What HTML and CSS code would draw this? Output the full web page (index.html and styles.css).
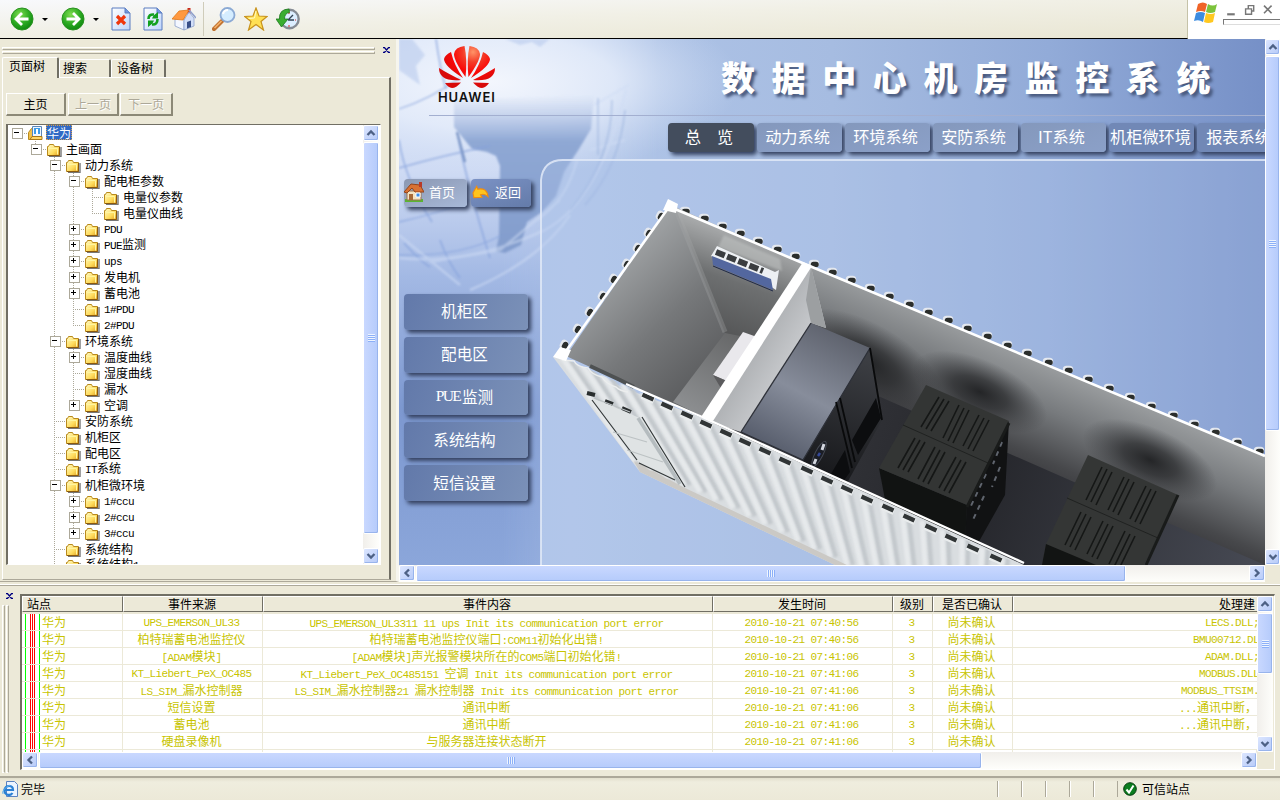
FILE: index.html
```html
<!DOCTYPE html>
<html lang="zh-CN">
<head>
<meta charset="utf-8">
<title>数据中心机房监控系统</title>
<link rel="stylesheet" href="styles.css">
</head>
<body>
<svg class="defs" width="0" height="0">
  <defs>
    <linearGradient id="fold" x1="0" y1="0" x2="1" y2="1"><stop offset="0" stop-color="#fffbc8"/><stop offset=".6" stop-color="#ffdc5c"/><stop offset="1" stop-color="#e0a020"/></linearGradient>
    <radialGradient id="ball" cx=".4" cy=".3" r=".7"><stop offset="0" stop-color="#7fdc50"/><stop offset=".6" stop-color="#2cab22"/><stop offset="1" stop-color="#108a10"/></radialGradient>
    <linearGradient id="page" x1="0" y1="0" x2="1" y2="1"><stop offset="0" stop-color="#fff"/><stop offset="1" stop-color="#bdd4fb"/></linearGradient>
    <symbol id="folder" viewBox="0 0 15 14"><path d="M2 13.500h12V4" fill="none" stroke="#777" stroke-width="1.400"/><path d="M.5 12.500V3.500h1l1-2h4l1 2h5v9z" fill="url(#fold)" stroke="#b98a1c"/><path d="M2 5.500h8.500v6" fill="none" stroke="#fff6a0"/><path d="M12.500 4v8.500H1" fill="none" stroke="#8c5a0c"/></symbol>
    <symbol id="up" viewBox="0 0 10 10"><path d="M1.500 7L5 3.500 8.500 7" fill="none" stroke="#4d6185" stroke-width="2.300"/></symbol>
    <symbol id="down" viewBox="0 0 10 10"><path d="M1.500 3L5 6.500 8.500 3" fill="none" stroke="#4d6185" stroke-width="2.300"/></symbol>
    <symbol id="left" viewBox="0 0 10 10"><path d="M7 1.500L3.500 5 7 8.500" fill="none" stroke="#4d6185" stroke-width="2.300"/></symbol>
    <symbol id="right" viewBox="0 0 10 10"><path d="M3 1.500L6.500 5 3 8.500" fill="none" stroke="#4d6185" stroke-width="2.300"/></symbol>
    <symbol id="close" viewBox="0 0 7 6"><path d="M0 .5h2M5 .5h2M0 5.500h2M5 5.500h2M1 0l5 6M6 0L1 6" stroke="#000080" stroke-width="1.300"/></symbol>
  </defs>
</svg>

<header class="toolbar">
  <div class="tools">
    <svg class="i-back" viewBox="0 0 24 24"><circle cx="12" cy="12" r="11" fill="url(#ball)" stroke="#2a9220"/><path d="M12 6l-6 6 6 6M6.500 12H18.500" fill="none" stroke="#fff" stroke-width="2.800"/></svg>
    <i class="drop"></i>
    <svg class="i-fwd" viewBox="0 0 24 24"><circle cx="12" cy="12" r="11" fill="url(#ball)" stroke="#2a9220"/><path d="M12 6l6 6-6 6M17.500 12H5.500" fill="none" stroke="#fff" stroke-width="2.800"/></svg>
    <i class="drop"></i>
    <svg class="i-stop" viewBox="0 0 20 24"><path d="M1 1h13l5 5v17H1z" fill="url(#page)" stroke="#5a7cc0"/><path d="M14 1v5h5" fill="#7296dc" stroke="#5a7cc0"/><path d="M6 9l8 8M14 9l-8 8" stroke="#f0360c" stroke-width="3.200"/></svg>
    <svg class="i-reload" viewBox="0 0 20 24"><path d="M1 1h13l5 5v17H1z" fill="url(#page)" stroke="#5a7cc0"/><path d="M14 1v5h5" fill="#7296dc" stroke="#5a7cc0"/><path d="M5.500 12q0-5 5.500-4.500M14.500 12q0 6-5.500 5.500" fill="none" stroke="#12a01e" stroke-width="2.600"/><path d="M10.500 8.500L15 5v6.500H9zM9.500 16.500L5 20v-6.500h6z" fill="#12a01e"/></svg>
    <svg class="i-house" viewBox="0 0 24 24"><path d="M15.500 1h3v6h-3z" fill="#c8281c"/><path d="M3 12v7l9 4V11z" fill="#f4f7ff" stroke="#8ca0ca" stroke-width=".8"/><path d="M12 13l5-8 5 6v8l-10 4z" fill="#d3dff8" stroke="#8ca0ca" stroke-width=".8"/><path d="M15 15l4-1.500v6.500l-4 1.500z" fill="#394f88"/><path d="M0 12L7 4l10-1-6 10z" fill="#ff9940" stroke="#e07818" stroke-width=".8"/><path d="M17 3l7 8" stroke="#8fa0cc" stroke-width="1.500"/></svg>
    <i class="sep"></i>
    <svg class="i-search" viewBox="0 0 24 24"><path d="M2 22l8-8" stroke="#c07230" stroke-width="4.200" stroke-linecap="round"/><path d="M2.500 21l7-7" stroke="#f5b26a" stroke-width="1.600"/><circle cx="15.500" cy="8" r="7" fill="#d5edff" stroke="#8caad4" stroke-width="1.800"/><path d="M11 7q1-4 5-4" fill="none" stroke="#fff" stroke-width="2"/></svg>
    <svg class="i-star" viewBox="0 0 24 24"><path d="M12 1l3 8 8 .5-6 5L19.500 23 12 17.500 4.500 23 7 14.500.8 9.500 9 9z" fill="#ffe054" stroke="#c8921c" stroke-width="1.200"/><path d="M12 4l-1.500 7-6 .5" fill="none" stroke="#fffbc4"/></svg>
    <svg class="i-history" viewBox="0 0 24 24"><circle cx="13.500" cy="12" r="9.200" fill="#dceeff" stroke="#858b94" stroke-width="2.400"/><path d="M12 13l5-5M12 13h6" stroke="#345" stroke-width="1.400"/><path d="M13 5v2M13 18v2M19 13h1" stroke="#e02020"/><path d="M13 2Q3 2 3.500 12H0l5.500 8 6.500-8H8.500q0-6 5-6.500z" fill="#3aad30" stroke="#1c7a1c" stroke-width=".8"/></svg>
  </div>
  <div class="brand">
    <svg class="i-win" viewBox="0 0 24 24"><path d="M4 3q5-3 9 0l-2 8q-4-2-9 0z" fill="#f06428"/><path d="M14 3q5 3 9 0l-2 8q-5 2-9 0z" fill="#7cc33c"/><path d="M2 12q5-2 9 0l-2 9q-4-3-9-1z" fill="#3c8ce0"/><path d="M12 12q5 2 9 0l-2 9q-5 2-9 0z" fill="#ffc820"/></svg>
    <div class="wctl">
      <svg viewBox="0 0 46 12"><path d="M1 9.500h7" stroke="#777" stroke-width="2"/><path d="M20.500 4V1.500h5v5H24M18 4.500h5.500v5H18z" fill="none" stroke="#777" stroke-width="1.300"/><path d="M35 1.500l7 7M42 1.500l-7 7" stroke="#777" stroke-width="1.500"/></svg>
      <i class="slot"></i>
    </div>
  </div>
</header>

<main>
  <aside>
    <div class="grip"><div class="bars"><i></i><i></i></div><svg class="x"><use href="#close"/></svg></div>
    <div class="tabs"><span class="tab on">页面树</span><span class="tab t2">搜索</span><span class="tab t3">设备树</span></div>
    <div class="sheet">
      <div class="btns"><button class="b1">主页</button><button class="b2" disabled>上一页</button><button class="b3" disabled>下一页</button></div>
      <div class="treebox">
        <ul class="tree">
          <li class="root"><div class="row"><b class="nd minus"></b><svg class="comp" viewBox="0 0 15 15"><path d="M.5 13.500v-7l3-4h2v11z" fill="#f2c14a" stroke="#b98a1c"/><path d="M4.500.5h9v10h-9z" fill="#eef6ff" stroke="#5a86b8"/><path d="M6 2h6v6H6z" fill="#3c9ce8"/><path d="M8 3h2v5H8z" fill="#fff"/><path d="M2 13.500h12v-3H4z" fill="#ffd564" stroke="#a87818"/></svg><span class="sel">华为</span></div>
            <ul>
              <li><div class="row"><b class="nd minus"></b><svg><use href="#folder"/></svg><span>主画面</span></div>
                <ul>
                  <li><div class="row"><b class="nd minus"></b><svg><use href="#folder"/></svg><span>动力系统</span></div>
                    <ul>
                      <li><div class="row"><b class="nd minus"></b><svg><use href="#folder"/></svg><span>配电柜参数</span></div>
                        <ul>
                          <li><div class="row"><b class="nd"></b><svg><use href="#folder"/></svg><span>电量仪参数</span></div></li>
                          <li><div class="row"><b class="nd"></b><svg><use href="#folder"/></svg><span>电量仪曲线</span></div></li>
                        </ul></li>
                      <li><div class="row"><b class="nd plus"></b><svg><use href="#folder"/></svg><span class="m">PDU</span></div></li>
                      <li><div class="row"><b class="nd plus"></b><svg><use href="#folder"/></svg><span><span class="m">PUE</span>监测</span></div></li>
                      <li><div class="row"><b class="nd plus"></b><svg><use href="#folder"/></svg><span class="m">ups</span></div></li>
                      <li><div class="row"><b class="nd plus"></b><svg><use href="#folder"/></svg><span>发电机</span></div></li>
                      <li><div class="row"><b class="nd plus"></b><svg><use href="#folder"/></svg><span>蓄电池</span></div></li>
                      <li><div class="row"><b class="nd"></b><svg><use href="#folder"/></svg><span class="m">1#PDU</span></div></li>
                      <li><div class="row"><b class="nd"></b><svg><use href="#folder"/></svg><span class="m">2#PDU</span></div></li>
                    </ul></li>
                  <li><div class="row"><b class="nd minus"></b><svg><use href="#folder"/></svg><span>环境系统</span></div>
                    <ul>
                      <li><div class="row"><b class="nd plus"></b><svg><use href="#folder"/></svg><span>温度曲线</span></div></li>
                      <li><div class="row"><b class="nd"></b><svg><use href="#folder"/></svg><span>湿度曲线</span></div></li>
                      <li><div class="row"><b class="nd"></b><svg><use href="#folder"/></svg><span>漏水</span></div></li>
                      <li><div class="row"><b class="nd plus"></b><svg><use href="#folder"/></svg><span>空调</span></div></li>
                    </ul></li>
                  <li><div class="row"><b class="nd"></b><svg><use href="#folder"/></svg><span>安防系统</span></div></li>
                  <li><div class="row"><b class="nd"></b><svg><use href="#folder"/></svg><span>机柜区</span></div></li>
                  <li><div class="row"><b class="nd"></b><svg><use href="#folder"/></svg><span>配电区</span></div></li>
                  <li><div class="row"><b class="nd"></b><svg><use href="#folder"/></svg><span><span class="m">IT</span>系统</span></div></li>
                  <li><div class="row"><b class="nd minus"></b><svg><use href="#folder"/></svg><span>机柜微环境</span></div>
                    <ul>
                      <li><div class="row"><b class="nd plus"></b><svg><use href="#folder"/></svg><span class="m">1#ccu</span></div></li>
                      <li><div class="row"><b class="nd plus"></b><svg><use href="#folder"/></svg><span class="m">2#ccu</span></div></li>
                      <li><div class="row"><b class="nd plus"></b><svg><use href="#folder"/></svg><span class="m">3#ccu</span></div></li>
                    </ul></li>
                  <li><div class="row"><b class="nd"></b><svg><use href="#folder"/></svg><span>系统结构</span></div></li>
                  <li><div class="row"><b class="nd"></b><svg><use href="#folder"/></svg><span>系统结构<span class="m">1</span></span></div></li>
                  <li></li>
                </ul></li>
            </ul></li>
        </ul>
        <div class="vs tree-vs"><i class="sb"><svg><use href="#up"/></svg></i><i class="th"><em></em></i><i class="sb end"><svg><use href="#down"/></svg></i></div>
      </div>
    </div>
  </aside>

  <section class="view">
    <div class="stage">
      <svg class="scene" viewBox="399 39 866 526">
        <defs>
          <linearGradient id="sky" x1="0" y1="0" x2="1" y2="0"><stop offset="0" stop-color="#a9bee6"/><stop offset=".2" stop-color="#b0c5e8"/><stop offset=".5" stop-color="#a6bce1"/><stop offset=".75" stop-color="#92abd8"/><stop offset="1" stop-color="#7690c7"/></linearGradient>
          <linearGradient id="side" x1="0" y1="39" x2="0" y2="565" gradientUnits="userSpaceOnUse"><stop offset="0" stop-color="#dfe8fa"/><stop offset=".25" stop-color="#cfdbf4"/><stop offset=".45" stop-color="#a3b9e4"/><stop offset=".7" stop-color="#7d98d0"/><stop offset="1" stop-color="#8ba6da"/></linearGradient>
          <linearGradient id="fade" x1="399" y1="0" x2="660" y2="0" gradientUnits="userSpaceOnUse"><stop offset="0" stop-color="#fff"/><stop offset=".4" stop-color="#fff"/><stop offset="1" stop-color="#fff" stop-opacity="0"/></linearGradient>
          <mask id="fadem"><rect x="399" y="39" width="270" height="526" fill="url(#fade)"/></mask>
          <linearGradient id="land" x1="0" y1="95" x2="0" y2="250" gradientUnits="userSpaceOnUse"><stop offset="0" stop-color="#a9bce2" stop-opacity="0"/><stop offset=".3" stop-color="#8fa8d4"/><stop offset="1" stop-color="#839dcd"/></linearGradient>
          <radialGradient id="glow"><stop offset="0" stop-color="#f3f6fd"/><stop offset=".5" stop-color="#e4ecfa" stop-opacity=".85"/><stop offset="1" stop-color="#cddbf3" stop-opacity="0"/></radialGradient>
          <linearGradient id="r1" x1="600" y1="260" x2="720" y2="390" gradientUnits="userSpaceOnUse"><stop offset="0" stop-color="#a4a7a9"/><stop offset=".5" stop-color="#76787a"/><stop offset="1" stop-color="#555658"/></linearGradient>
          <linearGradient id="r2" x1="760" y1="235" x2="725" y2="335" gradientUnits="userSpaceOnUse"><stop offset="0" stop-color="#b0b2b3"/><stop offset=".5" stop-color="#6d6f70"/><stop offset="1" stop-color="#555657"/></linearGradient>
          <linearGradient id="fl" x1="740" y1="330" x2="690" y2="410" gradientUnits="userSpaceOnUse"><stop offset="0" stop-color="#646566"/><stop offset="1" stop-color="#8c8e90"/></linearGradient>
          <linearGradient id="wall" x1="1050" y1="365" x2="1003" y2="475" gradientUnits="userSpaceOnUse"><stop offset="0" stop-color="#9a9d9f"/><stop offset=".35" stop-color="#777a7d"/><stop offset=".75" stop-color="#47484b"/><stop offset="1" stop-color="#333337"/></linearGradient>
          <linearGradient id="div" x1="730" y1="350" x2="780" y2="380" gradientUnits="userSpaceOnUse"><stop offset="0" stop-color="#a2a5a8"/><stop offset="1" stop-color="#c7c9cc"/></linearGradient>
          <linearGradient id="cab" x1="840" y1="330" x2="770" y2="460" gradientUnits="userSpaceOnUse"><stop offset="0" stop-color="#5d616c"/><stop offset=".5" stop-color="#878d9b"/><stop offset="1" stop-color="#4f5564"/></linearGradient>
          <linearGradient id="cs" x1="870" y1="360" x2="830" y2="480" gradientUnits="userSpaceOnUse"><stop offset="0" stop-color="#3c3e43"/><stop offset="1" stop-color="#17181b"/></linearGradient>
          <linearGradient id="floor" x1="860" y1="420" x2="1265" y2="560" gradientUnits="userSpaceOnUse"><stop offset="0" stop-color="#303136"/><stop offset=".3" stop-color="#25262b"/><stop offset="1" stop-color="#474a54"/></linearGradient>
          <radialGradient id="dark"><stop offset="0" stop-color="#202123" stop-opacity=".95"/><stop offset=".4" stop-color="#252628" stop-opacity=".7"/><stop offset="1" stop-color="#303134" stop-opacity="0"/></radialGradient>
          <clipPath id="frontc"><path d="M553 357L568 360 700 419 1020 565 847 565 683 487 633 462z"/></clipPath>
          <clipPath id="hallc"><path d="M811 267L1265 456V565H1020L706 421z"/></clipPath>
          <filter id="b1" color-interpolation-filters="sRGB"><feGaussianBlur stdDeviation=".9"/></filter>
        </defs>
        <rect x="399" y="39" width="866" height="526" fill="url(#sky)"/>
        <g mask="url(#fadem)"><path d="M399 39H670V160H562Q541 160 541 178V565H399z" fill="url(#side)"/></g>
        <ellipse cx="490" cy="82" rx="250" ry="95" fill="url(#glow)"/>
        <path d="M399 39V70L420 85 416 66 425 55 412 39zM505 39l15 6 12-3 8 5 10-8z" fill="#b9cbed" opacity=".6" filter="url(#b1)"/>
        <path d="M454 100V127L472 149 487 152 496 156 500 166 499 236 496 251 505 253 521 245 527 222 542 212 556 196 564 172 579 149 591 129 594 95z" fill="url(#land)" filter="url(#b1)"/>
        <g fill="none" stroke="#86a2dc" opacity=".75" filter="url(#b1)">
          <path d="M399 109Q430 99 460 78M399 168Q445 155 490 146M399 222Q440 213 470 200M399 255Q460 257 500 236" stroke-width="1.300"/>
          <path d="M457 132Q466 180 490 258M399 140Q405 180 432 222M440 240q8 22 20 38M404 243q16 18 26 24M436 39q4 30 10 50" stroke-width="1.600"/>
          <path d="M457 132l8 30" stroke="#5f7fb8" stroke-width="2.500"/>
        </g>
        <g fill="none" stroke="#cfdcf4" opacity=".55" filter="url(#b1)"><path d="M399 258Q470 265 545 230 600 200 626 90M470 290Q540 260 570 215M430 262L500 250 560 200M594 105l35-20M590 150l35-10M399 235L460 285M577 160q-10 40-40 60" stroke-width="2.500"/></g>
        <path d="M598 98V155M612 100Q612 160 570 210M625 110Q620 165 585 205" fill="none" stroke="#8fa9d8" opacity=".6" stroke-width="1.300" filter="url(#b1)"/>
        <path d="M541 565V178Q542 160 562 160H1265V565z" fill="#b7caed" opacity=".3"/>
        <path d="M541 566V180Q543 160 563 160H1267" fill="none" stroke="#e1e9f7" stroke-width="2" opacity=".85"/>
        <path d="M429 115.500H1265" stroke="#a3afd0"/>
        <!-- corrugation seen above the far edges -->
        <g transform="translate(.5 1.500)" stroke-linecap="round">
          <path d="M683 209h3M702 216h3M720 224h3M738 231h3M756 239h3M775 247h3M793 254h3M812 262h3M830 270h3M849 278h3M868 286h3M887 294h3M907 302h3M926 310h3M946 318h3M965 326h3M985 334h3M1005 343h3M1025 351h3M1046 360h3M1066 368h3M1086 377h3M1107 386h3M1128 395h3M1149 404h3M1171 413h3M1192 422h3M1213 430h3M1235 440h3M1257 449h3M660 213l-1 2M648 230l-1 2M637 245l-1 2M626 261l-1 2M613 276l-1 2M602 293l-1 2M589 309l-1 2M577 326l-1 2M564 342l-1 2" stroke="#e4e8ef" stroke-width="7.500"/>
          <path d="M684 210h2.500M703 217h2.500M721 225h2.500M739 232h2.500M757 240h2.500M776 248h2.500M794 255h2.500M813 263h2.500M831 271h2.500M850 279h2.500M869 287h2.500M888 295h2.500M908 303h2.500M927 311h2.500M947 319h2.500M966 327h2.500M986 335h2.500M1006 344h2.500M1026 352h2.500M1047 361h2.500M1067 369h2.500M1087 378h2.500M1108 387h2.500M1129 396h2.500M1150 405h2.500M1172 414h2.500M1193 423h2.500M1214 431h2.500M1236 441h2.500M1258 450h2.500M661 214l-1 2M649 231l-1 2M638 246l-1 2M627 262l-1 2M614 277l-1 2M603 294l-1 2M590 310l-1 2M578 327l-1 2M565 343l-1 2" stroke="#2b2e2c" stroke-width="5.500"/>
        </g>
        <!-- first room -->
        <path d="M669 207L566 356 702 418 806 266z" fill="url(#r1)"/>
        <path d="M675 207L806 264 713 412 725 333z" fill="url(#r2)"/>
        <path d="M725 333L673 402 704 417 760 340z" fill="url(#fl)"/>
        <path d="M677 212L725 332" stroke="#a9abac" stroke-width="5" opacity=".3"/>
        <path d="M743 332L757 337 729 382 713 375z" fill="#e9e8ec"/><path d="M713 375l14 6-5 9z" fill="#5b5b5d"/>
        <path d="M724 235l56 24 2 12-64-24z" fill="#c5c8c7" opacity=".5" filter="url(#b1)"/>
        <path d="M717 246L775 272 779 270 776 290 773 288 711 256z" fill="#edf0f3"/>
        <path d="M712 256L771 279 773 290 713 265z" fill="#53679f"/><path d="M713 266l60 25" stroke="#1f2947"/>
        <path d="M716 252l47 19" stroke="#3a3d40" stroke-width="6" stroke-dasharray="9.500 2.500"/>
        <!-- equipment hall -->
        <g clip-path="url(#hallc)">
          <path d="M811 267L1265 456V565H700V421z" fill="url(#wall)"/>
          <ellipse cx="868" cy="362" rx="85" ry="38" transform="rotate(30 868 362)" fill="url(#dark)"/>
          <ellipse cx="980" cy="392" rx="72" ry="32" transform="rotate(24 980 392)" fill="url(#dark)"/>
          <ellipse cx="1150" cy="460" rx="72" ry="32" transform="rotate(24 1150 460)" fill="url(#dark)"/>
          <path d="M860 388L1074 482 1265 565H1000L830 487z" fill="url(#floor)"/>
          <path d="M811 267L826 328 811 323 741 432 706 421z" fill="url(#div)"/>
          <path d="M811 267L826 328 811 323 806 300z" fill="#9c9fa1"/>
          <path d="M870 348L882 420 847 483 803 470V460z" fill="url(#cs)"/>
          <path d="M811 323L870 348 803 460 741 432z" fill="url(#cab)"/>
          <path d="M741 432L803 460 870 348" fill="none" stroke="#2d3038" stroke-width="1.300"/>
          <path d="M811 323L741 432" stroke="#30333b" stroke-width="1.300"/>
          <path d="M836 402L852 468M840 398L855 462M870 348L882 420" stroke="#090a0b" stroke-width="1.800" fill="none"/>
          <path d="M876 398L881 418 858 455 852 440zM845 450l5 22-10 14-12-7z" fill="#0c0d0f"/>
          <ellipse cx="819" cy="454" rx="4" ry="14" transform="rotate(27 819 454)" fill="#1b1e26" stroke="#454952"/><path d="M822 450l2-6M814 464l2-5" stroke="#d2d6de" stroke-width="3"/><path d="M818 456l2-3" stroke="#35499a" stroke-width="2.500"/>
          <path d="M1009 421L1005 495 977 545 965 540 967 505z" fill="#111213"/>
          <path d="M879 468L967 505 965 545 887 510z" fill="#111312"/>
          <path d="M926 385L1009 421 967 505 879 468z" fill="#333534"/>
          <path d="M903 425L988 463" stroke="#202221"/>
          <path d="M1002 442l-9 22M986 474l-16 34M1000 467l-8 20M984 496l-12 26" stroke="#5f646d" stroke-width="2" stroke-dasharray="5 5"/>
          <path d="M1009 423L967 507" stroke="#191b1a" stroke-width="3"/>
          <path d="M939 397l-18 30M944 399l-18 30M949 401l-18 30M959 405l-16 33M964 408l-16 33M969 410l-16 33M979 415l-16 31M984 418l-16 31M989 420l-16 31M915 438l-17 30M920 440l-17 30M925 442l-17 30M935 447l-17 32M940 450l-17 32M945 452l-17 32M956 457l-17 31M961 460l-17 31M966 462l-17 31" stroke="#151716" stroke-width="1.600"/>
          <path d="M1088 455L1178 495 1144 565H1042L1046 544z" fill="#343635"/><path d="M1046 544l50 21h-54z" fill="#121413"/>
          <path d="M1067 498L1158 538" stroke="#202221"/><path d="M1178 495l-32 70" stroke="#191b1a" stroke-width="3"/>
          <path d="M1102 467l-16 33M1107 469l-16 33M1112 472l-16 33M1124 477l-16 33M1129 479l-16 33M1134 482l-16 33M1146 486l-16 33M1151 489l-16 33M1156 491l-16 33M1081 512l-16 33M1086 514l-16 33M1091 517l-16 33M1103 521l-16 33M1108 524l-16 33M1113 526l-16 33M1125 531l-16 33M1130 534l-16 33M1135 536l-16 33" stroke="#151716" stroke-width="1.600"/>
        </g>
        <!-- rims and partition -->
        <path d="M669 206.500L812 267 1265 456" fill="none" stroke="#fff" stroke-width="2.600"/>
        <path d="M669 207L564 354" stroke="#fff" stroke-width="2.600"/>
        <path d="M803 262L812 266 713 421 701 417z" fill="#fff"/>
        <!-- corrugated front -->
        <path d="M553 357L568 360 624 388 700 417 1024 565H835L640 472z" fill="#d9dde0"/>
        <path d="M633 460L683 487 847 565H835L640 472z" fill="#cbc9c5"/>
        <g clip-path="url(#frontc)">
          <path d="M560 357L632 462M580 364L650 470M600 373L666 478M620 383L682 485M640 392L698 492M660 401L714 500M680 410L731 508M700 420L747 516M720 429L763 524M740 438L780 532M760 447L796 541M780 456L812 549M800 466L828 557M820 475L845 565M840 484L861 573M860 493L877 581M880 502L894 589M900 512L910 597M920 521L926 605M940 530L943 613M960 539L959 621M980 548L975 629M1000 558L992 637" transform="translate(8 0)" fill="none" stroke="#c3c8cc" stroke-width="4.500" filter="url(#b1)"/>
          <path d="M560 357L632 462M580 364L650 470M600 373L666 478M620 383L682 485M640 392L698 492M660 401L714 500M680 410L731 508M700 420L747 516M720 429L763 524M740 438L780 532M760 447L796 541M780 456L812 549M800 466L828 557M820 475L845 565M840 484L861 573M860 493L877 581M880 502L894 589M900 512L910 597M920 521L926 605M940 530L943 613M960 539L959 621M980 548L975 629M1000 558L992 637" transform="translate(2 0)" fill="none" stroke="#e6e9eb" stroke-width="5" filter="url(#b1)"/>
        </g>
        <path d="M648 396l12 5M667 405l12 5M687 414l12 5M706 423l12 5M726 432l12 5M745 441l12 5M765 450l12 5M785 460l12 5M807 469l12 5M827 479l12 5M847 488l12 5M867 498l12 5M888 507l12 5M909 517l12 5M931 527l12 5M951 537l12 5M973 547l12 5M996 557l12 5" transform="translate(-6 -.5)" stroke="#e9eced" stroke-width="7"/>
        <path d="M648 396l11 5M667 405l11 5M687 414l11 5M706 423l11 5M726 432l11 5M745 441l11 5M765 450l11 5M785 460l11 5M807 469l11 5M827 479l11 5M847 488l11 5M867 498l11 5M888 507l11 5M909 517l11 5M931 527l11 5M951 537l11 5M973 547l11 5M996 557l11 5" transform="translate(-5.500 -1.500)" stroke="#313536" stroke-width="4.500"/>
        <path d="M590 366L620 380 634 387" fill="none" stroke="#4e5152" stroke-width="4"/>
        <path d="M562 360l12 1q3 6 14 7 4 7 14 9 4 7 14 10 4 4 12 5" fill="none" stroke="#eceeee" stroke-width="1.500"/>
        <path d="M626 384L700 416 1024 563" stroke="#fff" stroke-width="2.300" fill="none"/>
        <path d="M592 398L626 412 644 420 683 484 637 461z" fill="#dfe3e4"/>
        <path d="M592 400L637 460M639 463L675 480M642 417L685 487" fill="none" stroke="#333839" stroke-width="1.200"/>
        <path d="M587 393l8 2M605 401l8 3M622 408l9 4" stroke="#292d2e" stroke-width="4"/>
        <path d="M594 398l36 14M613 432l34 10M627 450l36 12" fill="none" stroke="#bcc2c4" stroke-width="1.300"/>
        <path d="M638 418L680 484" stroke="#b5bcbf" stroke-width="3.500"/>
        <path d="M668 199L678 204 676 213 663 210z" fill="#fff"/><path d="M560 347L571 350 566 361 553 357z" fill="#fff"/>
      </svg>
      <div class="ui">
        <div class="top">
          <div class="logo">
            <svg viewBox="0 0 56 44"><defs><radialGradient id="pet" cx="34" cy="6" r="34" gradientUnits="userSpaceOnUse"><stop offset="0" stop-color="#ff9468"/><stop offset=".3" stop-color="#f43c28"/><stop offset=".6" stop-color="#fa0808"/><stop offset="1" stop-color="#d80a0a"/></radialGradient></defs><g fill="url(#pet)"><path d="M26.500 31Q15 15 15 8 16 1 25.500 0 28.500 14 26.500 31z"/><path d="M29.500 31Q27.500 14 30.500 0 40 1 41 8 41 15 29.500 31z"/><path d="M24 32Q5 20 5 13 6 9 12 6 15 19 24 32z"/><path d="M32 32Q51 20 51 13 50 9 44 6 41 19 32 32z"/><path d="M22 34Q9 35 4 31 0 28 0 22 8 27 22 34z"/><path d="M34 34Q47 35 52 31 56 28 56 22 48 27 34 34z"/><path d="M6 37l16-.5q-5 5.500-9 5.500-4-.5-7-5z"/><path d="M50 37l-16-.5q5 5.500 9 5.500 4-.5 7-5z"/></g></svg>
            <span>HUAWEI</span>
          </div>
          <h1>数据中心机房监控系统</h1>
        </div>
        <nav><a class="cur">总&emsp;览</a><a>动力系统</a><a>环境系统</a><a>安防系统</a><a>IT系统</a><a>机柜微环境</a><a class="last">报表系统</a></nav>
        <div class="quick">
          <a><svg viewBox="0 0 20 20"><path d="M1 17h18v3H1z" fill="#5ab432"/><path d="M3 9h14v9H3z" fill="#f4e3c3" stroke="#9a7350"/><path d="M0 10L7 2l9 1 4 7H11L8 6 3 11z" fill="#d97133" stroke="#94451c"/><path d="M15 0h3v5h-3z" fill="#b83a28"/><path d="M5 12h4v6H5z" fill="#a86a38"/><path d="M12 11h4v4h-4z" fill="#3a8ce8" stroke="#fff"/></svg>首页</a>
          <a class="ret"><svg viewBox="0 0 18 16"><path d="M1 9L5 2l1 3Q16 3 17 13q-4-4-8-2l1.500 2.500L2 14z" fill="#ffc41e" stroke="#f08c10" stroke-width="1.200"/></svg>返回</a>
        </div>
        <div class="menu"><a>机柜区</a><a>配电区</a><a><span class="pue">PUE</span>监测</a><a>系统结构</a><a>短信设置</a></div>
      </div>
    </div>
    <div class="vs main-vs"><i class="sb"><svg><use href="#up"/></svg></i><i class="th"><em></em></i><i class="sb end"><svg><use href="#down"/></svg></i></div>
    <div class="hs main-hs"><i class="sb"><svg><use href="#left"/></svg></i><i class="th"><em></em></i><i class="sb end"><svg><use href="#right"/></svg></i></div>
  </section>
</main>

<section class="events">
  <div class="vgrip"><svg class="x"><use href="#close"/></svg><div class="vbars"><i></i><i></i></div></div>
  <div class="gridbox">
    <div class="table">
      <div class="tr th-row"><span class="first">站点</span><span>事件来源</span><span>事件内容</span><span>发生时间</span><span>级别</span><span>是否已确认</span><span class="adv a0">处理建</span></div>
      <div class="tr"><span class="first">华为</span><span class="m">UPS_EMERSON_UL33</span><span><span class="m">UPS_EMERSON_UL3311 11 ups Init its communication port error</span></span><span class="m">2010-10-21 07:40:56</span><span class="m">3</span><span>尚未确认</span><span class="adv a1 m">LECS.DLL;</span></div>
      <div class="tr"><span class="first">华为</span><span>柏特瑞蓄电池监控仪</span><span>柏特瑞蓄电池监控仪端口<span class="m">:COM11</span>初始化出错<span class="m">!</span></span><span class="m">2010-10-21 07:40:56</span><span class="m">3</span><span>尚未确认</span><span class="adv a2 m">BMU00712.DL</span></div>
      <div class="tr"><span class="first">华为</span><span><span class="m">[ADAM</span>模块<span class="m">]</span></span><span><span class="m">[ADAM</span>模块<span class="m">]</span>声光报警模块所在的<span class="m">COM5</span>端口初始化错<span class="m">!</span></span><span class="m">2010-10-21 07:41:06</span><span class="m">3</span><span>尚未确认</span><span class="adv a1 m">ADAM.DLL;</span></div>
      <div class="tr"><span class="first">华为</span><span class="m">KT_Liebert_PeX_OC485</span><span><span class="m">KT_Liebert_PeX_OC485151 </span>空调<span class="m"> Init its communication port error</span></span><span class="m">2010-10-21 07:41:06</span><span class="m">3</span><span>尚未确认</span><span class="adv a3 m">MODBUS.DLL</span></div>
      <div class="tr"><span class="first">华为</span><span><span class="m">LS_SIM_</span>漏水控制器</span><span><span class="m">LS_SIM_</span>漏水控制器<span class="m">21 </span>漏水控制器<span class="m"> Init its communication port error</span></span><span class="m">2010-10-21 07:41:06</span><span class="m">3</span><span>尚未确认</span><span class="adv a4 m">MODBUS_TTSIM.</span></div>
      <div class="tr"><span class="first">华为</span><span>短信设置</span><span>通讯中断</span><span class="m">2010-10-21 07:41:06</span><span class="m">3</span><span>尚未确认</span><span class="adv a5"><span class="m">...</span>通讯中断，</span></div>
      <div class="tr"><span class="first">华为</span><span>蓄电池</span><span>通讯中断</span><span class="m">2010-10-21 07:41:06</span><span class="m">3</span><span>尚未确认</span><span class="adv a5"><span class="m">...</span>通讯中断，</span></div>
      <div class="tr"><span class="first">华为</span><span>硬盘录像机</span><span>与服务器连接状态断开</span><span class="m">2010-10-21 07:41:06</span><span class="m">3</span><span>尚未确认</span><span class="adv"></span></div>
      <div class="tr"><span class="first"></span><span></span><span></span><span></span><span></span><span></span><span></span></div>
    </div>
    <div class="vs ev-vs"><i class="sb"><svg><use href="#up"/></svg></i><i class="th"><em></em></i><i class="sb end"><svg><use href="#down"/></svg></i></div>
    <div class="hs ev-hs"><i class="sb"><svg><use href="#left"/></svg></i><i class="th"><em></em></i><i class="sb end"><svg><use href="#right"/></svg></i></div>
  </div>
</section>

<footer>
  <svg class="ie" viewBox="0 0 16 16"><path d="M4.500.5h8l3 3v12h-11z" fill="#eaf3ff" stroke="#5a82c0"/><path d="M10.500 12Q8.500 15 5 13.500 2 12 2.500 8.500 3.500 5 7 5q4 0 4 4H3.500" fill="none" stroke="#2a80d4" stroke-width="2.200"/><path d="M1 13Q-1 9 8 4" fill="none" stroke="#60b0ec"/></svg>
  <span class="done">完毕</span>
  <i></i><i></i><i></i><i></i><i></i>
  <div class="zone"><svg viewBox="0 0 14 14"><circle cx="7" cy="7" r="6.300" fill="#0b7d1e" stroke="#063c10"/><path d="M3.500 7.500l2.500 3 4.500-7" fill="none" stroke="#fff" stroke-width="2"/></svg>可信站点</div>
</footer>
</body>
</html>
```
FILE: styles.css
```css
* { box-sizing: border-box; }
body {
  margin: 0; width: 1280px; height: 800px; overflow: hidden;
  display: flex; flex-direction: column;
  background: #ece9d8; color: #000;
  font: 12px/16px "Noto Sans CJK SC", sans-serif;
}
.defs { position: absolute; }
svg { display: block; flex: none; }
i, em { font-style: normal; flex: none; }
.m { font-family: "Liberation Mono", monospace; font-size: 11px; letter-spacing: -.6px; white-space: pre; }

/* toolbar */
.toolbar { height: 39px; flex: none; display: flex; }
.tools {
  width: 1190px; display: flex; align-items: center; padding-left: 10px;
  background: linear-gradient(to bottom right, #f8f9fc 0, #f1f0e6 45%, #e9e6d3 100%);
  border-right: 1px solid #c5c2a8; border-bottom: 1px solid #000;
}
.tools svg { width: 24px; height: 24px; }
.tools .i-stop, .tools .i-reload { width: 20px; margin-right: 12px; }
.tools .i-reload { margin-right: 9px; }
.tools .i-search, .tools .i-star { margin-right: 8px; }
.drop { border: 3px solid transparent; border-top-color: #000; border-bottom: 0; margin: 0 13px 0 8px; }
.i-fwd + .drop { margin-right: 12px; }
.sep { width: 1px; height: 34px; background: #cfccba; margin: 0 8px 0 7px; }
.brand { flex: 1; background: #fff; display: flex; padding: 1px 0 0 6px; }
.i-win { width: 24px; height: 24px; }
.wctl { padding: 3px 0 0 5px; }
.wctl svg { width: 50px; height: 13px; margin-left: 3px; }
.slot { display: block; width: 57px; height: 6px; margin-top: 2px; border: 1px solid #777; border-bottom-color: #ddd; border-right: 0; }

main { display: flex; height: 546px; flex: none; border-bottom: 1px solid #fff; }

/* left panel */
aside { width: 399px; height: 543px; padding: 5px 0 0 2px; border-bottom: 1px solid #aca899; border-right: 3px solid #f6f5ee; }
.grip { display: flex; align-items: center; height: 12px; margin-bottom: 1px; }
.bars { width: 373px; display: flex; flex-direction: column; gap: 1px; }
.bars i { height: 3px; border: 1px solid #fff; border-color: #fff #aca899 #aca899 #fff; }
.x { width: 7px; height: 6px; }
.grip .x { margin-left: 8px; }
.tabs { display: flex; align-items: flex-end; height: 20px; }
.tab { border: 1px solid #fff; border-bottom: 0; border-right: 2px solid #716f64; border-radius: 2px 2px 0 0; height: 18px; line-height: 15px; }
.tab.on { width: 57px; padding-left: 6px; position: relative; z-index: 1; height: 21px; margin-bottom: -1px; background: #ece9d8; }
.t2 { width: 52px; padding-left: 3px; }
.t3 { width: 55px; padding-left: 5px; }
.sheet { width: 389px; height: 503px; border: 1px solid #fff; border-right: 2px solid #716f64; border-bottom: 1px solid #aca899; padding: 15px 0 0 3px; }
.btns { display: flex; gap: 2px; height: 31px; }
.btns button {
  height: 23px; padding: 0; border: 1px solid #fff; border-right: 2px solid #8c8977; border-bottom: 2px solid #8c8977;
  background: #ece9d8; color: #000; font: inherit; line-height: 18px;
}
.btns .b1 { width: 60px; }
.btns .b2 { width: 51px; }
.btns .b3 { width: 53px; margin-left: -1px; }
.btns button:disabled { color: #aca899; text-shadow: 1px 1px #fff; }
.treebox { width: 375px; height: 441px; border: 1px solid #fff; border-top-color: #716f64; border-left: 2px solid #716f64; background: #fff; display: flex; overflow: hidden; padding-right: 1px; }
.tree { flex: 1; overflow: hidden; white-space: nowrap; }
.tree, .tree ul { margin: 0; padding: 0; list-style: none; }
.tree ul { padding-left: 19px; }
.tree li { background: repeating-linear-gradient(#aca899 0 1px, transparent 1px 2px) 8px 0 / 1px 100% no-repeat; }
.tree li:last-child { background-size: 1px 8px; }
.tree .root { background: none; }
.row { display: flex; align-items: center; height: 16px; }
.row svg { width: 15px; height: 14px; margin: 2px 3px 0 1px; }
.row .comp { height: 15px; margin-top: 0; }
.row > span { padding: 0 1px; line-height: 15px; margin-top: -1px; }
.row > .m { line-height: 16px; margin-top: 1px; }
.sel { background: #316ac5; color: #fff; outline: 1px dotted #d8a050; outline-offset: -1px; }
.nd { width: 19px; height: 16px; flex: none; background: repeating-linear-gradient(90deg, #aca899 0 1px, transparent 1px 2px) 8px 8px / 11px 1px no-repeat; display: flex; align-items: center; padding-left: 4px; }
.minus::before, .plus::before {
  content: ""; width: 9px; height: 9px; border: 1px solid #aca899;
  background: linear-gradient(#000, #000) 1px 3px / 5px 1px no-repeat, #fff;
}
.plus::before { background: linear-gradient(#000, #000) 1px 3px / 5px 1px no-repeat, linear-gradient(#000, #000) 3px 1px / 1px 5px no-repeat, #fff; }

/* scroll bars */
.vs, .hs { display: flex; background: linear-gradient(90deg, #f1efeb, #fefefb); }
.vs { width: 16px; flex-direction: column; flex: none; }
.hs { height: 17px; background: linear-gradient(#f1efeb, #fefefb); }
.sb, .th { border: 1px solid #fff; border-radius: 2px; box-shadow: inset -1px -1px #98b4ec; background: linear-gradient(135deg, #dce6ff, #b6caf8); display: flex; align-items: center; justify-content: center; }
.sb { width: 16px; height: 16px; }
.sb svg { width: 10px; height: 10px; }
.end { margin-left: auto; }
.vs .end { margin-left: 0; margin-top: auto; }
.vs .th { background: linear-gradient(90deg, #c9d8ff, #b5cbfb); margin-top: 1px; }
.hs .th { background: linear-gradient(#c9d8ff, #b5cbfb); margin-left: 1px; }
.vs em { width: 7px; height: 8px; background: repeating-linear-gradient(#eef4fe 0 1px, #8cb0f8 1px 2px); }
.hs em { width: 8px; height: 7px; background: repeating-linear-gradient(90deg, #eef4fe 0 1px, #8cb0f8 1px 2px); }
.tree-vs .th { height: 392px; }
.main-vs .th { height: 375px; }
.main-hs .th { width: 710px; }
.ev-vs .th { height: 61px; }
.ev-hs .th { width: 943px; }

/* monitoring page */
.view { flex: 1; display: grid; grid-template: 526px 17px / 866px 15px; }
.main-vs { width: 15px; }
.main-vs .sb { width: 15px; }
.stage { display: grid; overflow: hidden; }
.scene { grid-area: 1 / 1; width: 866px; height: 526px; }
.ui { grid-area: 1 / 1; position: relative; min-width: 0; color: #fff; }
.top { display: flex; height: 84px; }
.logo { width: 60px; margin: 7px 0 0 39px; color: #111; }
.logo svg { width: 58px; height: 44px; }
.logo span { display: block; width: 62px; font: 600 13px/15px Inter, sans-serif; letter-spacing: .9px; }
h1 { margin: 13px 0 0 223px; font: 900 34px/50px "Noto Sans CJK SC", sans-serif; letter-spacing: 16.6px; white-space: nowrap; text-shadow: 3px 3px 3px #47587d; }
nav { display: flex; gap: 3px; padding-left: 269px; width: 1000px; }
nav a, .quick a, .menu a { border-radius: 4px; display: flex; align-items: center; justify-content: center; background: linear-gradient(160deg, #8498bc, #8ba0c8); box-shadow: 3px 3px 4px #34415f; padding-bottom: 3px; }
nav a { width: 85px; height: 29px; flex: none; font-size: 16.200px; padding-right: 4px; white-space: nowrap; }
nav a:nth-child(n+6) { background: #7188b6; padding-right: 2px; }
nav .cur { background: #434d5d; width: 86px; }
nav .last { background: #687da9; padding-right: 0; }
.quick { display: flex; gap: 4px; padding: 27px 0 0 5px; height: 142px; }
.quick a { width: 63px; height: 28px; font-size: 13px; gap: 5px; background: linear-gradient(160deg, #8b98b3, #a8b9d8); justify-content: flex-start; }
.quick .ret { width: 60px; background: linear-gradient(160deg, #7b92c5, #647ba9); padding-left: 1px; gap: 6px; }
.quick svg { width: 20px; height: 20px; }
.quick .ret svg { width: 17px; height: 16px; }
.menu { display: flex; flex-direction: column; gap: 7px; padding: 0 0 0 5px; }
.menu a { width: 124px; height: 35.800px; font-size: 15.600px; background: linear-gradient(110deg, #6279aa, #7b91b8); padding-right: 3px; }
.pue { font-family: "Liberation Serif", serif; font-size: 15.600px; letter-spacing: -1.800px; margin-right: 2px; }

/* event list */
.events { height: 193px; flex: none; border-top: 1px solid #aca899; border-bottom: 2px solid #aca899; display: flex; }
.vgrip { width: 20px; padding: 7px 0 0 2px; }
.vgrip .x { margin-left: 4px; }
.vbars { display: flex; gap: 1px; margin-top: 6px; }
.vbars i { width: 3px; height: 168px; border: 1px solid #fff; border-right-color: #aca899; }
.gridbox { width: 1255px; height: 176px; margin-top: 8px; border: 1px solid #fff; border-top: 2px solid #716f64; border-left: 2px solid #716f64; display: grid; grid-template: 156px 17px / 1235px 17px; }
.table { background: #fff; overflow: hidden; }
.tr { display: grid; grid-template-columns: 101px 140px 450px 180px 40px 80px 244px; height: 17px; width: 1235px; overflow: hidden; color: #c8c400; }
.tr > span { height: 17px; line-height: 15px; text-align: center; white-space: nowrap; overflow: hidden; padding-right: 2px; border-right: 1px solid #ece9d8; border-bottom: 1px solid #ece9d8; }
.tr > .m { line-height: 18px; }
.tr > .first {
  text-align: left; padding-left: 20px;
  background: linear-gradient(90deg, transparent 3px, #0f0 3px 4px, transparent 4px 8px, #f00 8px 9px, transparent 9px 10px, #f00 10px 11px, transparent 11px 12px, #f00 12px 13px, transparent 13px 17px, #0f0 17px 18px, transparent 18px);
}
.th-row { background: #ece9d8; color: #000; height: 18px; border-bottom: 1px solid #ece9d8; }
.th-row > span { height: 16px; line-height: 14px; background: #ece9d8; border: 1px solid #fff; border-right-color: #716f64; border-bottom: 1px solid #716f64; }
.th-row > .first { padding-left: 4px; background: #ece9d8; }
.tr > .adv { text-align: left; border-right: 0; padding-right: 0; }
.tr > .a0 { padding-left: 205px; }
.tr > .a1 { padding-left: 192px; }
.tr > .a2 { padding-left: 180px; }
.tr > .a3 { padding-left: 186px; }
.tr > .a4 { padding-left: 168px; }
.tr > .a5 { padding-left: 166px; }

/* status bar */
footer { flex: 1; display: flex; align-items: center; padding-left: 2px; background: linear-gradient(#e2dfcc, #efedde 4px, #ece9d8); }
.ie { width: 16px; height: 16px; margin-right: 3px; }
.done { width: 976px; }
footer > i { width: 24px; height: 16px; border-left: 1px solid #aca899; box-shadow: inset 1px 0 #fff; }
.zone { display: flex; align-items: center; gap: 5px; padding-left: 5px; height: 16px; border-left: 1px solid #aca899; }
.zone svg { width: 14px; height: 14px; }
```
